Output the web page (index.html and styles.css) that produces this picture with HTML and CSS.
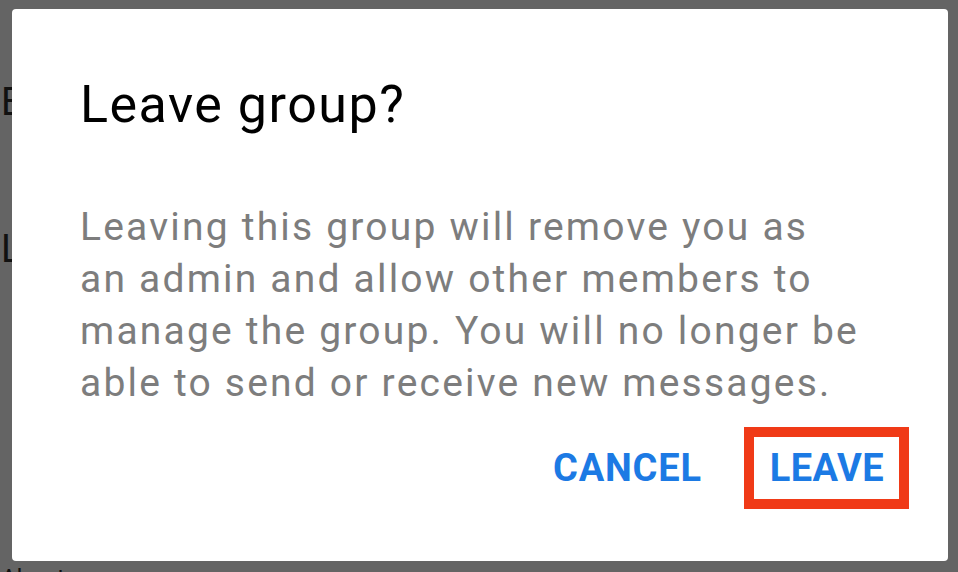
FILE: index.html
```html
<!DOCTYPE html>
<html lang="en">
  <head>
    <meta charset="UTF-8" />
    <meta name="viewport" content="width=device-width, initial-scale=1.0" />
    <title>Leave group?</title>
    <link rel="stylesheet" href="styles.css">
  </head>
  <body>
    <div id="page">
      <div class="row row-first">E</div>
      <div class="row row-second">L</div>
      <div class="row row-last">About</div>
    </div>
    <div id="dialog">
      <h2 id="dialog-title">Leave group?</h2>
      <p id="dialog-text">Leaving this group will remove you as<br>an admin and allow other members to<br>manage the group. You will no longer be<br>able to send or receive new messages.</p>
      <div id="dialog-actions">
        <button class="action">CANCEL</button>
        <button class="action highlighted">LEAVE</button>
      </div>
    </div>
  </body>
</html>
```

FILE: styles.css
```css
* {
  margin: 0;
  padding: 0;
  box-sizing: border-box;
  font-family: Roboto, "Liberation Sans", sans-serif;
}
body {
  background-color: #646464;
  width: 958px;
  height: 572px;
  overflow: hidden;
  position: relative;
}
#page {
  display: flex;
  flex-direction: column;
  padding-left: 1px;
  color: #111;
}
#page .row {
  font-size: 38px;
  line-height: 1;
  white-space: nowrap;
}
#page .row-first {
  margin-top: 83px;
}
#page .row-second {
  margin-top: 109px;
}
#page .row-last {
  margin-top: 298px;
  font-size: 24px;
}
#dialog {
  position: absolute;
  left: 12px;
  top: 9px;
  width: 936px;
  height: 552px;
  background: #fff;
  border-radius: 4px;
  padding: 64px 39px 0 68px;
  display: flex;
  flex-direction: column;
}
#dialog-title {
  font-size: 52px;
  font-weight: 400;
  letter-spacing: 1.5px;
  color: #000;
  line-height: 64px;
}
#dialog-text {
  margin-top: 64px;
  font-size: 39px;
  letter-spacing: 2.2px;
  line-height: 52px;
  color: #7d7d7d;
}
#dialog-actions {
  display: flex;
  justify-content: flex-end;
  align-items: center;
  gap: 31px;
  margin-top: 18px;
}
#dialog-actions .action {
  border: none;
  background: none;
  color: #1c7ae4;
  font-size: 38px;
  font-weight: 700;
  letter-spacing: 0.8px;
  padding: 22px 11px;
  line-height: 38px;
  cursor: pointer;
}
#dialog-actions .highlighted {
  border: 10px solid #f03a17;
  padding: 12px 15px 12px 16px;
  letter-spacing: 0.4px;
}
```
